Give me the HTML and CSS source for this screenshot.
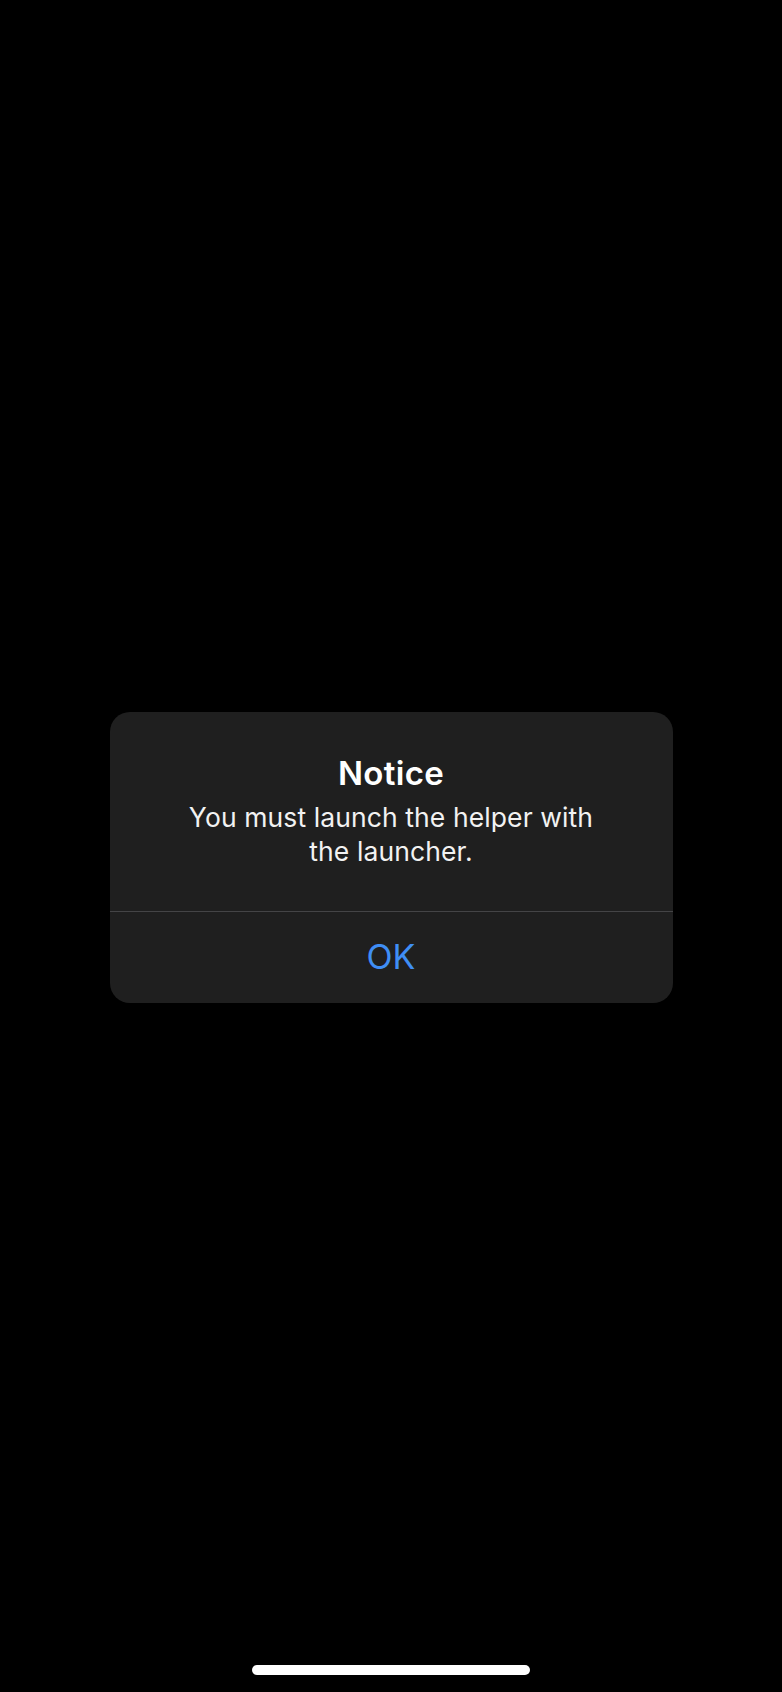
FILE: index.html
```html
<!DOCTYPE html>
<html lang="en">
<head>
<meta charset="utf-8">
<title>Notice</title>
<link rel="stylesheet" href="styles.css">
</head>
<body>
<div class="screen">
  <div class="stage">
    <div class="alert" role="alertdialog">
      <div class="alert-content">
        <div class="alert-title">Notice</div>
        <div class="alert-message">You must launch the helper with<br>the launcher.</div>
      </div>
      <div class="alert-actions">
        <button class="alert-button">OK</button>
      </div>
    </div>
  </div>
  <div class="home-indicator"></div>
</div>
</body>
</html>
```

FILE: styles.css
```css
html, body {
  margin: 0;
  padding: 0;
  background: #000;
}

.screen {
  height: 1692px;
  display: flex;
  flex-direction: column;
  align-items: center;
  font-family: Inter, "Noto Sans", "Liberation Sans", sans-serif;
  color: #fff;
}

.stage {
  flex: 1;
  align-self: stretch;
  display: flex;
  align-items: center;
  justify-content: center;
  padding-top: 49px;
}

.alert {
  width: 563px;
  height: 291px;
  background: #1f1f1f;
  border-radius: 20px;
  display: flex;
  flex-direction: column;
  overflow: hidden;
}

.alert-content {
  height: 200px;
  box-sizing: border-box;
  padding-top: 41px;
  display: flex;
  flex-direction: column;
  align-items: center;
  text-align: center;
  border-bottom: 1px solid #444446;
}

.alert-title {
  font-size: 33px;
  line-height: 40px;
  font-weight: 600;
  letter-spacing: 0.3px;
  color: #fff;
}

.alert-message {
  margin-top: 7px;
  font-size: 26.5px;
  line-height: 34px;
  font-weight: 400;
  letter-spacing: 0.1px;
  color: #f2f2f2;
}

.alert-actions {
  flex: 1;
  display: flex;
}

.alert-button {
  flex: 1;
  background: transparent;
  border: 0;
  padding: 0;
  margin: 0;
  font-family: inherit;
  font-size: 34px;
  line-height: 90px;
  font-weight: 400;
  color: #3f8ef5;
}

.home-indicator {
  width: 278px;
  height: 10px;
  border-radius: 5px;
  background: #fff;
  margin-bottom: 17px;
}
```
